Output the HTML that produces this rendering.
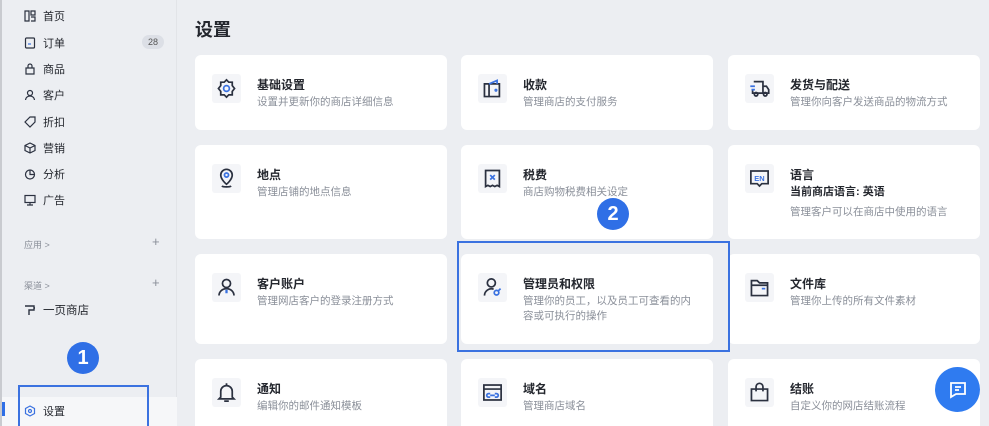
<!DOCTYPE html>
<html><head><meta charset="utf-8"><style>
*{margin:0;padding:0;box-sizing:border-box}
html,body{width:989px;height:426px;overflow:hidden}
body{background:#eceef2;font-family:"Liberation Sans","Noto Sans CJK SC",sans-serif;position:relative;color:#24272e}
.side{position:absolute;left:0;top:0;width:177px;height:426px;background:#eceef2;border-left:2px solid #c9cbd0;border-right:1px solid #e2e4e8}
.nav{position:absolute;left:22px;font-size:11px;color:#24272e;display:flex;align-items:center}
.nav svg{width:12px;height:12px;margin-right:7px}
.badge{position:absolute;left:140px;top:35px;width:22px;height:14px;border-radius:7px;background:#dcdfe6;font-size:9px;color:#555;text-align:center;line-height:14px}
.sec{position:absolute;left:22px;font-size:9px;color:#8a8f99}
.plus{position:absolute;left:150px;font-size:13px;color:#8a8f99}
h1{position:absolute;left:195px;top:16px;font-size:18px;font-weight:bold;color:#24272e}
.card{position:absolute;width:252px;background:#fff;border-radius:6px}
.ic{position:absolute;left:17px;top:19px;width:29px;height:29px;background:#f4f5f8;border-radius:3px;display:flex;align-items:center;justify-content:center}
.ic svg{width:23px;height:23px;fill:none;stroke:#2b3140;stroke-width:1.5}
.t{position:absolute;left:62px;top:21px;font-size:12px;font-weight:bold}
.d{position:absolute;left:62px;top:40px;font-size:10.5px;color:#8a8f99;line-height:15px;width:170px}
.circ{position:absolute;width:32px;height:32px;border-radius:50%;background:#2f6fe6;color:#fff;font-weight:bold;font-size:20px;text-align:center;line-height:32px}
.hl{position:absolute;border:2px solid #3b72e0}
</style></head><body>
<div class="side">
<div class="nav" style="top:8px"><svg viewBox="0 0 12 12" fill="none" stroke="#2b3140" stroke-width="1.2"><path d="M1 1h4v10H1zM7 1h4v4H7zM7 7h4v4H7"/></svg>首页</div>
<div class="nav" style="top:35px"><svg viewBox="0 0 12 12" fill="none" stroke="#2b3140" stroke-width="1.2"><rect x="1.5" y="1" width="9" height="10" rx="1"/><path d="M4 7h3" stroke="#3b72e0"/></svg>订单</div>
<div class="badge">28</div>
<div class="nav" style="top:61px"><svg viewBox="0 0 12 12" fill="none" stroke="#2b3140" stroke-width="1.2"><path d="M2 5h8v6H2zM4 5V3a2 2 0 014 0v2"/></svg>商品</div>
<div class="nav" style="top:87px"><svg viewBox="0 0 12 12" fill="none" stroke="#2b3140" stroke-width="1.2"><circle cx="6" cy="4" r="2.5"/><path d="M1.5 11a4.5 4 0 019 0"/></svg>客户</div>
<div class="nav" style="top:114px"><svg viewBox="0 0 12 12" fill="none" stroke="#2b3140" stroke-width="1.2"><path d="M1 6l5-5h5v5l-5 5z"/></svg>折扣</div>
<div class="nav" style="top:140px"><svg viewBox="0 0 12 12" fill="none" stroke="#2b3140" stroke-width="1.2"><path d="M6 1l5 2.5v5L6 11 1 8.5v-5zM1 3.5L6 6l5-2.5M6 6v5"/></svg>营销</div>
<div class="nav" style="top:166px"><svg viewBox="0 0 12 12" fill="none" stroke="#2b3140" stroke-width="1.2"><circle cx="6" cy="6.5" r="4.5"/><path d="M6 2v4.5h4.5"/></svg>分析</div>
<div class="nav" style="top:192px"><svg viewBox="0 0 12 12" fill="none" stroke="#2b3140" stroke-width="1.2"><rect x="1" y="1.5" width="10" height="7"/><path d="M6 8.5v2.5M3 11h6"/></svg>广告</div>
<div class="sec" style="top:238px">应用 &gt;</div><div class="plus" style="top:234px">+</div>
<div class="sec" style="top:279px">渠道 &gt;</div><div class="plus" style="top:275px">+</div>
<div class="nav" style="top:302px;font-size:11.5px"><svg viewBox="0 0 12 12" fill="none" stroke="#2b3140" stroke-width="1.4"><path d="M1 2h9v4H5v5M10 4h1"/></svg>一页商店</div>
<div style="position:absolute;left:0;top:397px;width:175px;height:29px;background:#f6f7f9"></div>
<div style="position:absolute;left:0;top:402px;width:3px;height:14px;background:#2f6fe6"></div>
<div class="nav" style="top:403px"><svg viewBox="0 0 12 12" fill="none" stroke="#3b72e0" stroke-width="1.2"><path d="M6 1l4.5 2.5v5L6 11 1.5 8.5v-5z"/><circle cx="6" cy="6" r="1.5"/></svg>设置</div>
</div>
<div class="circ" style="left:67px;top:342px">1</div>
<div class="hl" style="left:18px;top:385px;width:131px;height:44px"></div>

<h1>设置</h1>

<div class="card" style="left:195px;top:55px;height:75px"><div class="ic"><svg viewBox="0 0 20 20"><path d="M10 2.5l2 2h3v3l2 2.5-2 2.5v3h-3l-2 2-2-2H5v-3L3 10l2-2.5v-3h3z"/><circle cx="10" cy="10" r="2.5" stroke="#3b72e0"/></svg></div><div class="t">基础设置</div><div class="d">设置并更新你的商店详细信息</div></div>
<div class="card" style="left:461px;top:55px;height:75px"><div class="ic"><svg viewBox="0 0 20 20"><path d="M3 6h13v11H3zM7 6v11"/><path d="M7 6l7-3v3" stroke="#3b72e0"/><circle cx="13" cy="11.5" r=".6" stroke="#3b72e0"/></svg></div><div class="t">收款</div><div class="d">管理商店的支付服务</div></div>
<div class="card" style="left:728px;top:55px;height:75px"><div class="ic"><svg viewBox="0 0 20 20"><path d="M5 4h8v10H4v-3M13 8h3l2 3v3h-5"/><circle cx="7" cy="15" r="1.5"/><circle cx="15" cy="15" r="1.5"/><path d="M2 8h4M3 11h3" stroke="#3b72e0"/></svg></div><div class="t">发货与配送</div><div class="d" style="width:185px">管理你向客户发送商品的物流方式</div></div>

<div class="card" style="left:195px;top:145px;height:94px"><div class="ic"><svg viewBox="0 0 20 20"><path d="M10 15s-5-4-5-8a5 5 0 0110 0c0 4-5 8-5 8z"/><circle cx="10" cy="7" r="1.8" stroke="#3b72e0"/><path d="M6 16.5c1 1 7 1 8 0"/></svg></div><div class="t">地点</div><div class="d">管理店铺的地点信息</div></div>
<div class="card" style="left:461px;top:145px;height:94px"><div class="ic"><svg viewBox="0 0 20 20"><path d="M4 3h12v14l-2-1-2 1-2-1-2 1-2-1-2 1z"/><path d="M8 7l4 4M12 7l-4 4" stroke="#3b72e0"/></svg></div><div class="t">税费</div><div class="d">商店购物税费相关设定</div></div>
<div class="card" style="left:728px;top:145px;height:94px"><div class="ic"><svg viewBox="0 0 20 20"><path d="M2.5 3.5h15v11H12l-2 2-2-2H2.5z"/><text x="10" y="12" font-size="6.5" font-weight="bold" text-anchor="middle" fill="#3b72e0" stroke="none" font-family="Liberation Sans">EN</text></svg></div><div class="t">语言</div><div class="d" style="color:#24272e;font-weight:bold;font-size:11px">当前商店语言: 英语</div><div class="d" style="top:60px;width:185px">管理客户可以在商店中使用的语言</div></div>

<div class="card" style="left:195px;top:254px;height:90px"><div class="ic"><svg viewBox="0 0 20 20"><circle cx="10" cy="6.5" r="3.5"/><path d="M3.5 17a6.5 6 0 0113 0"/><path d="M10 12v3" stroke="#3b72e0" stroke-width="2"/></svg></div><div class="t">客户账户</div><div class="d">管理网店客户的登录注册方式</div></div>
<div class="card" style="left:461px;top:254px;height:90px"><div class="ic"><svg viewBox="0 0 20 20"><circle cx="9" cy="6" r="3.5"/><path d="M3 17a6 6 0 018-5.5"/><circle cx="13.5" cy="14.5" r="2" stroke="#3b72e0"/><path d="M15 13l2-2" stroke="#3b72e0"/></svg></div><div class="t">管理员和权限</div><div class="d" style="width:175px">管理你的员工，以及员工可查看的内容或可执行的操作</div></div>
<div class="card" style="left:728px;top:254px;height:90px"><div class="ic"><svg viewBox="0 0 20 20"><path d="M3 4h5l2 2h7v11H3z"/><path d="M3 8h14"/><path d="M12 11h3" stroke="#3b72e0"/></svg></div><div class="t">文件库</div><div class="d">管理你上传的所有文件素材</div></div>

<div class="card" style="left:195px;top:359px;height:80px"><div class="ic"><svg viewBox="0 0 20 20"><path d="M5 14V9a5 5 0 0110 0v5l1.5 1.5h-13z"/><path d="M10 2v2M8 17.5h4"/></svg></div><div class="t">通知</div><div class="d">编辑你的邮件通知模板</div></div>
<div class="card" style="left:461px;top:359px;height:80px"><div class="ic"><svg viewBox="0 0 20 20"><rect x="2.5" y="3.5" width="15" height="13"/><path d="M2.5 7h15"/><path d="M8 11h-1.5a1.5 1.5 0 000 3H8M12 11h1.5a1.5 1.5 0 010 3H12M8 12.5h4" stroke="#3b72e0"/></svg></div><div class="t">域名</div><div class="d">管理商店域名</div></div>
<div class="card" style="left:728px;top:359px;height:80px"><div class="ic"><svg viewBox="0 0 20 20"><path d="M3 7h14v10H3z"/><path d="M7 9V5a3 3 0 016 0v4"/></svg></div><div class="t">结账</div><div class="d">自定义你的网店结账流程</div></div>

<div class="hl" style="left:457px;top:241px;width:273px;height:111px"></div>
<div class="circ" style="left:597px;top:198px">2</div>
<div style="position:absolute;left:935px;top:367px;width:45px;height:45px;border-radius:50%;background:#2f7bf0;display:flex;align-items:center;justify-content:center"><svg width="20" height="20" viewBox="0 0 20 20" fill="none" stroke="#fff" stroke-width="1.8"><path d="M3 3h14v11H8l-5 3z"/><path d="M7 7h6M7 10h4"/></svg></div>
</body></html>
